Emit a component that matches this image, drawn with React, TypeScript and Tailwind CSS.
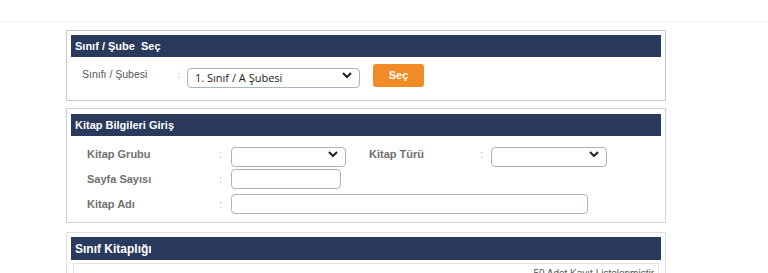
import React from 'react'

const font = { fontFamily: 'Tahoma, "DejaVu Sans", sans-serif' }

const Chevron = () => (
  <svg
    className="pointer-events-none absolute right-[8px] top-1/2 -translate-y-1/2"
    width="10"
    height="7"
    viewBox="0 0 10 7"
  >
    <path d="M1 1.5 L5 5.5 L9 1.5" fill="none" stroke="#222" strokeWidth="2" />
  </svg>
)

const Select = ({ w, value }: { w: string; value?: string }) => (
  <div className={`relative ${w} h-[20px]`}>
    <select
      defaultValue={value}
      className="w-full h-full appearance-none rounded-[4px] border border-[#a9b4c2] bg-white pl-[7px] text-[11px] text-[#222] font-['Open_Sans',sans-serif] outline-none"
    >
      {value && <option>{value}</option>}
    </select>
    <Chevron />
  </div>
)

const Input = ({ w }: { w: string }) => (
  <input
    type="text"
    className={`${w} h-[20px] rounded-[4px] border border-[#a9b4c2] bg-white outline-none`}
  />
)

const Header = ({ title, big }: { title: string; big?: boolean }) => (
  <div
    className={`bg-[#2a3a5c] text-white font-bold pl-[4px] flex items-center whitespace-pre font-['Liberation_Sans',Arial,sans-serif] ${
      big ? 'h-[23px] text-[12px]' : 'h-[22px] text-[11px]'
    }`}
  >
    {title}
  </div>
)

const Label = ({ text, w }: { text: string; w: string }) => (
  <div className={`${w} text-[11px] font-bold text-[#707070] font-['Liberation_Sans',Arial,sans-serif]`}>{text}</div>
)

const Colon = ({ w }: { w: string }) => (
  <div className={`${w} text-[11px] text-[#b5b5b5] font-['Liberation_Sans',Arial,sans-serif]`}>:</div>
)

export default function App() {
  return (
    <div className="w-[768px] h-[273px] overflow-hidden bg-white" style={font}>
      <div className="h-[22px] border-b border-[#eeeeee]" />
      <div className="ml-[66px] w-[600px] mt-[8px] flex flex-col">
        {/* Sınıf / Şube Seç */}
        <div className="border border-[#c8c8c8] px-[4px] pt-[4px] pb-[13px]">
          <Header title="Sınıf / Şube  Seç" />
          <div className="flex items-center mt-[6px] h-[24px]">
            <div className="w-[106px] pl-[11px] text-[10.5px] text-[#555] font-['Liberation_Sans',Arial,sans-serif]">
              Sınıfı / Şubesi
            </div>
            <div className="w-[10px] text-[11px] text-[#bbb]">:</div>
            <Select w="w-[173px]" value="1. Sınıf / A Şubesi" />
            <button className="ml-[13px] w-[51px] h-[23px] rounded-[3px] bg-[#f08b26] text-white text-[11px] font-bold font-['Liberation_Sans',Arial,sans-serif]">
              Seç
            </button>
          </div>
        </div>

        {/* Kitap Bilgileri Giriş */}
        <div className="mt-[7px] border border-[#d0d0d0] px-[4px] pt-[5px] pb-[8px]">
          <Header title="Kitap Bilgileri Giriş" />
          <div className="flex flex-col gap-[5px] mt-[8px] pl-[16px]">
            <div className="flex items-center h-[20px]">
              <Label text="Kitap Grubu" w="w-[132px]" />
              <Colon w="w-[12px]" />
              <Select w="w-[115px]" />
              <div className="w-[23px]" />
              <Label text="Kitap Türü" w="w-[111px]" />
              <Colon w="w-[11px]" />
              <Select w="w-[116px]" />
            </div>
            <div className="flex items-center h-[20px]">
              <Label text="Sayfa Sayısı" w="w-[132px]" />
              <Colon w="w-[12px]" />
              <Input w="w-[110px]" />
            </div>
            <div className="flex items-center h-[20px]">
              <Label text="Kitap Adı" w="w-[132px]" />
              <Colon w="w-[12px]" />
              <Input w="w-[357px]" />
            </div>
          </div>
        </div>

        {/* Sınıf Kitaplığı */}
        <div className="mt-[9px] border border-[#dedede] px-[4px] pt-[4px] pb-[8px]">
          <Header title="Sınıf Kitaplığı" big />
          <div className="mx-[2px] mt-[3px] border border-[#e2e2e2] h-[40px] px-[4px] pt-[2px] text-right text-[10px] text-[#555] font-['Liberation_Sans',Arial,sans-serif]">
            50 Adet Kayıt Listelenmiştir
          </div>
        </div>
      </div>
    </div>
  )
}
